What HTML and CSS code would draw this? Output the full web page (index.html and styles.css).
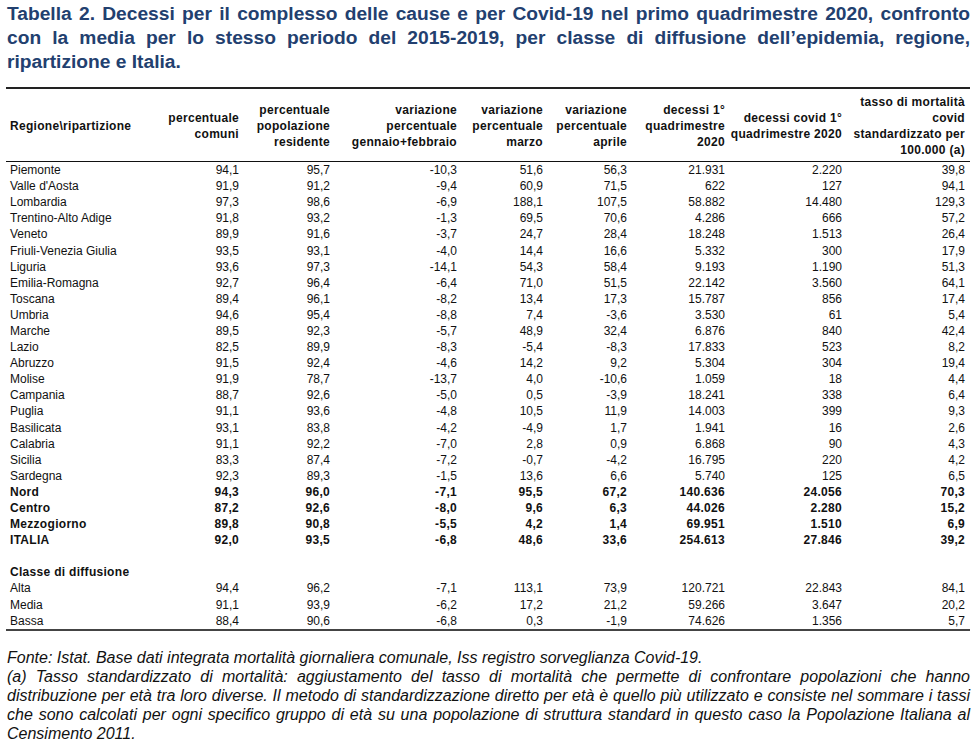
FILE: index.html
```html
<!DOCTYPE html>
<html lang="it">
<head>
<meta charset="utf-8">
<title>Tabella 2</title>
<link rel="stylesheet" href="styles.css">
</head>
<body>
<div class="page">
  <h1 class="title">Tabella 2. Decessi per il complesso delle cause e per Covid-19 nel primo quadrimestre 2020, confronto con la media per lo stesso periodo del 2015-2019, per classe di diffusione dell’epidemia, regione, ripartizione e Italia.</h1>
  <table class="data">
    <colgroup>
      <col class="c0"><col class="c1"><col class="c2"><col class="c3"><col class="c4"><col class="c5"><col class="c6"><col class="c7"><col class="c8">
    </colgroup>
    <thead>
      <tr>
        <th class="lab">Regione\ripartizione</th>
        <th>percentuale<br>comuni</th>
        <th>percentuale<br>popolazione<br>residente</th>
        <th>variazione<br>percentuale<br>gennaio+febbraio</th>
        <th>variazione<br>percentuale<br>marzo</th>
        <th>variazione<br>percentuale<br>aprile</th>
        <th>decessi 1°<br>quadrimestre<br>2020</th>
        <th>decessi covid 1°<br>quadrimestre 2020</th>
        <th>tasso di mortalità<br>covid<br>standardizzato per<br>100.000 (a)</th>
      </tr>
    </thead>
    <tbody>
      <tr><td>Piemonte</td><td>94,1</td><td>95,7</td><td>-10,3</td><td>51,6</td><td>56,3</td><td>21.931</td><td>2.220</td><td>39,8</td></tr>
      <tr><td>Valle d'Aosta</td><td>91,9</td><td>91,2</td><td>-9,4</td><td>60,9</td><td>71,5</td><td>622</td><td>127</td><td>94,1</td></tr>
      <tr><td>Lombardia</td><td>97,3</td><td>98,6</td><td>-6,9</td><td>188,1</td><td>107,5</td><td>58.882</td><td>14.480</td><td>129,3</td></tr>
      <tr><td>Trentino-Alto Adige</td><td>91,8</td><td>93,2</td><td>-1,3</td><td>69,5</td><td>70,6</td><td>4.286</td><td>666</td><td>57,2</td></tr>
      <tr><td>Veneto</td><td>89,9</td><td>91,6</td><td>-3,7</td><td>24,7</td><td>28,4</td><td>18.248</td><td>1.513</td><td>26,4</td></tr>
      <tr><td>Friuli-Venezia Giulia</td><td>93,5</td><td>93,1</td><td>-4,0</td><td>14,4</td><td>16,6</td><td>5.332</td><td>300</td><td>17,9</td></tr>
      <tr><td>Liguria</td><td>93,6</td><td>97,3</td><td>-14,1</td><td>54,3</td><td>58,4</td><td>9.193</td><td>1.190</td><td>51,3</td></tr>
      <tr><td>Emilia-Romagna</td><td>92,7</td><td>96,4</td><td>-6,4</td><td>71,0</td><td>51,5</td><td>22.142</td><td>3.560</td><td>64,1</td></tr>
      <tr><td>Toscana</td><td>89,4</td><td>96,1</td><td>-8,2</td><td>13,4</td><td>17,3</td><td>15.787</td><td>856</td><td>17,4</td></tr>
      <tr><td>Umbria</td><td>94,6</td><td>95,4</td><td>-8,8</td><td>7,4</td><td>-3,6</td><td>3.530</td><td>61</td><td>5,4</td></tr>
      <tr><td>Marche</td><td>89,5</td><td>92,3</td><td>-5,7</td><td>48,9</td><td>32,4</td><td>6.876</td><td>840</td><td>42,4</td></tr>
      <tr><td>Lazio</td><td>82,5</td><td>89,9</td><td>-8,3</td><td>-5,4</td><td>-8,3</td><td>17.833</td><td>523</td><td>8,2</td></tr>
      <tr><td>Abruzzo</td><td>91,5</td><td>92,4</td><td>-4,6</td><td>14,2</td><td>9,2</td><td>5.304</td><td>304</td><td>19,4</td></tr>
      <tr><td>Molise</td><td>91,9</td><td>78,7</td><td>-13,7</td><td>4,0</td><td>-10,6</td><td>1.059</td><td>18</td><td>4,4</td></tr>
      <tr><td>Campania</td><td>88,7</td><td>92,6</td><td>-5,0</td><td>0,5</td><td>-3,9</td><td>18.241</td><td>338</td><td>6,4</td></tr>
      <tr><td>Puglia</td><td>91,1</td><td>93,6</td><td>-4,8</td><td>10,5</td><td>11,9</td><td>14.003</td><td>399</td><td>9,3</td></tr>
      <tr><td>Basilicata</td><td>93,1</td><td>83,8</td><td>-4,2</td><td>-4,9</td><td>1,7</td><td>1.941</td><td>16</td><td>2,6</td></tr>
      <tr><td>Calabria</td><td>91,1</td><td>92,2</td><td>-7,0</td><td>2,8</td><td>0,9</td><td>6.868</td><td>90</td><td>4,3</td></tr>
      <tr><td>Sicilia</td><td>83,3</td><td>87,4</td><td>-7,2</td><td>-0,7</td><td>-4,2</td><td>16.795</td><td>220</td><td>4,2</td></tr>
      <tr><td>Sardegna</td><td>92,3</td><td>89,3</td><td>-1,5</td><td>13,6</td><td>6,6</td><td>5.740</td><td>125</td><td>6,5</td></tr>
      <tr class="bold"><td>Nord</td><td>94,3</td><td>96,0</td><td>-7,1</td><td>95,5</td><td>67,2</td><td>140.636</td><td>24.056</td><td>70,3</td></tr>
      <tr class="bold"><td>Centro</td><td>87,2</td><td>92,6</td><td>-8,0</td><td>9,6</td><td>6,3</td><td>44.026</td><td>2.280</td><td>15,2</td></tr>
      <tr class="bold"><td>Mezzogiorno</td><td>89,8</td><td>90,8</td><td>-5,5</td><td>4,2</td><td>1,4</td><td>69.951</td><td>1.510</td><td>6,9</td></tr>
      <tr class="bold"><td>ITALIA</td><td>92,0</td><td>93,5</td><td>-6,8</td><td>48,6</td><td>33,6</td><td>254.613</td><td>27.846</td><td>39,2</td></tr>
      <tr class="blank"><td></td><td></td><td></td><td></td><td></td><td></td><td></td><td></td><td></td></tr>
      <tr class="bold"><td>Classe di diffusione</td><td></td><td></td><td></td><td></td><td></td><td></td><td></td><td></td></tr>
      <tr><td>Alta</td><td>94,4</td><td>96,2</td><td>-7,1</td><td>113,1</td><td>73,9</td><td>120.721</td><td>22.843</td><td>84,1</td></tr>
      <tr><td>Media</td><td>91,1</td><td>93,9</td><td>-6,2</td><td>17,2</td><td>21,2</td><td>59.266</td><td>3.647</td><td>20,2</td></tr>
      <tr class="last"><td>Bassa</td><td>88,4</td><td>90,6</td><td>-6,8</td><td>0,3</td><td>-1,9</td><td>74.626</td><td>1.356</td><td>5,7</td></tr>
    </tbody>
  </table>
  <div class="notes">
    <p class="note">Fonte: Istat. Base dati integrata mortalità giornaliera comunale, Iss registro sorveglianza Covid-19.</p>
    <p class="note justify">(a) Tasso standardizzato di mortalità: aggiustamento del tasso di mortalità che permette di confrontare popolazioni che hanno distribuzione per età tra loro diverse. Il metodo di standardizzazione diretto per età è quello più utilizzato e consiste nel sommare i tassi che sono calcolati per ogni specifico gruppo di età su una popolazione di struttura standard in questo caso la Popolazione Italiana al Censimento 2011.</p>
  </div>
</div>
</body>
</html>
```

FILE: styles.css
```css
html, body {
  margin: 0;
  padding: 0;
  background: #ffffff;
}

body {
  font-family: "Liberation Sans", Arial, sans-serif;
  color: #111111;
}

.page {
  padding: 2px 6px 0 7px;
}

.title {
  margin: 0 0 13px 0;
  font-size: 19.2px;
  line-height: 24px;
  font-weight: bold;
  color: #22406f;
  text-align: justify;
}

.data {
  margin-left: -1px;
  width: 964px;
  border-collapse: collapse;
  table-layout: fixed;
  font-size: 12px;
}

.c0 { width: 154px; }
.c1 { width: 79px; }
.c2 { width: 91px; }
.c3 { width: 127px; }
.c4 { width: 86px; }
.c5 { width: 84px; }
.c6 { width: 98px; }
.c7 { width: 117px; }
.c8 { width: 128px; }

.data thead tr {
  border-top: 2px solid #222222;
  border-bottom: 1px solid #111111;
}

.data th {
  padding: 5px 0 3px 0;
  font-weight: bold;
  line-height: 16px;
  text-align: right;
  vertical-align: middle;
  letter-spacing: 0.3px;
  white-space: nowrap;
}

.data th.lab {
  text-align: left;
  padding-left: 4px;
  letter-spacing: 0.3px;
}

.data th:last-child,
.data td:last-child {
  padding-right: 5px;
}

.data td {
  height: 16.1px;
  padding: 0;
  line-height: 16px;
  text-align: right;
  white-space: nowrap;
}

.data td:first-child {
  text-align: left;
  padding-left: 4px;
}

.data tr.bold td {
  font-weight: bold;
  letter-spacing: 0.3px;
}

.data tr.last {
  border-bottom: 2px solid #444444;
}

.notes {
  margin-top: 17px;
  width: 963px;
}

.note {
  margin: 0;
  font-size: 16px;
  line-height: 19px;
  font-style: italic;
  color: #111111;
}

.justify {
  text-align: justify;
}
```
